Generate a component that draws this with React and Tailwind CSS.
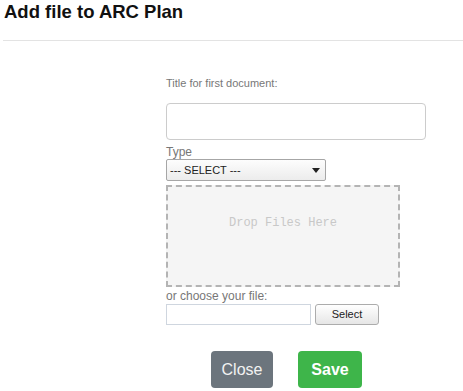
import React from 'react';

const App = () => {
  return (
    <div className="w-[463px] h-[391px] bg-white font-['Liberation_Sans',Arial,sans-serif] overflow-hidden">
      {/* header */}
      <div className="h-[40px] pl-[4px]">
        <h1 className="text-[18.5px] leading-[24px] font-bold text-[#111]">Add file to ARC Plan</h1>
      </div>
      <div className="ml-[3px] h-px bg-[#e3e3e3]" />

      {/* form body */}
      <div className="pl-[166px] pt-[34px]">
        <p className="text-[11px] leading-[16px] text-[#777]">Title for first document:</p>
        <input
          type="text"
          className="mt-[12px] block w-[260px] h-[37px] rounded-[4px] border border-[#ccc] outline-none"
        />

        <p className="mt-[5px] text-[12px] leading-[14px] text-[#777]">Type</p>
        <div className="flex items-center justify-between w-[160px] h-[22px] pl-[3px] pr-[5px] rounded-[2px] border border-[#a6a6a6] bg-gradient-to-b from-[#fdfdfd] to-[#ececec] text-[11px] text-[#222]">
          <span>--- SELECT ---</span>
          <svg width="8" height="5" viewBox="0 0 8 5">
            <path d="M0 0 L8 0 L4 5 Z" fill="#222" />
          </svg>
        </div>

        <div className="mt-[4px] w-[234px] h-[102px] border-2 border-dashed border-[#b4b4b4] bg-[#f5f5f5] pt-[29px] text-center font-['Liberation_Mono','Courier_New',monospace] text-[12px] leading-[14px] text-[#c8c8c8]">
          Drop Files Here
        </div>

        <p className="mt-[2px] text-[12px] leading-[14px] text-[#777]">or choose your file:</p>
        <div className="mt-[1px] flex items-center gap-[4px]">
          <input
            type="text"
            className="block w-[145px] h-[21px] border border-[#cfd6df] outline-none"
          />
          <button className="w-[64px] h-[21px] rounded-[3px] border border-[#acacac] bg-gradient-to-b from-white to-[#e6e6e6] text-[11px] text-[#222]">
            Select
          </button>
        </div>

        <div className="mt-[26px] flex gap-[25px] pl-[45px]">
          <button className="w-[62px] h-[37px] rounded-[4px] bg-[#6c757d] text-[16px] text-[#f2f2f2]">
            Close
          </button>
          <button className="w-[64px] h-[37px] rounded-[4px] bg-[#3eb54a] text-[16px] font-bold text-white">
            Save
          </button>
        </div>
      </div>
    </div>
  );
};

export default App;
